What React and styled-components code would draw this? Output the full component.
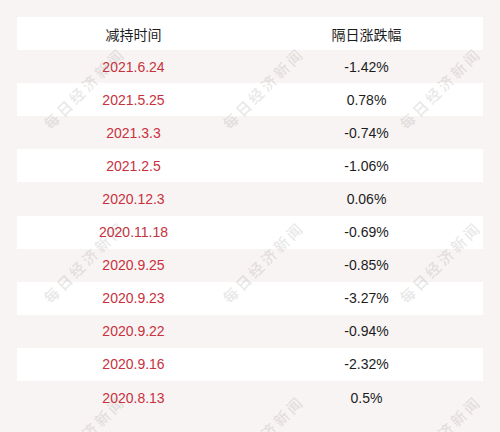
import React from "react";
import styled, { createGlobalStyle } from "styled-components";

const GlobalStyle = createGlobalStyle`
    html, body {
        margin: 0;
        padding: 0;
        background: #f8f4f4;
    }
    body {
        font-family: "Liberation Sans", "Noto Sans CJK SC", sans-serif;
    }
`;

const Page = styled.div`
    position: relative;
    width: 500px;
    height: 432px;
    overflow: hidden;
    background: #f8f4f4;
    padding: 17px 17px 0 17px;
    box-sizing: border-box;
`;

const Table = styled.div`
    width: 466px;
    display: flex;
    flex-direction: column;
`;

const Row = styled.div`
    display: grid;
    grid-template-columns: 1fr 1fr;
    height: 33.1px;
    align-items: center;
    background: ${(props) => (props.striped ? "transparent" : "#ffffff")};
`;

const Cell = styled.div`
    text-align: center;
    font-size: 14px;
    line-height: 16px;
    color: ${(props) => (props.red ? "#c8313d" : "#1c1c1c")};
    font-family: ${(props) =>
        props.head
            ? `"Noto Sans CJK SC", sans-serif`
            : `"Liberation Sans", Arial, sans-serif`};
`;

const Mark = styled.div`
    position: absolute;
    left: ${(props) => props.x}px;
    top: ${(props) => props.y}px;
    transform: translate(-50%, -50%) rotate(-45deg);
    font-family: "Noto Sans CJK SC", serif;
    font-weight: 700;
    font-size: 15px;
    letter-spacing: 3px;
    white-space: nowrap;
    color: rgba(90, 80, 80, 0.13);
    pointer-events: none;
`;

const rows = [
    ["2021.6.24", "-1.42%"],
    ["2021.5.25", "0.78%"],
    ["2021.3.3", "-0.74%"],
    ["2021.2.5", "-1.06%"],
    ["2020.12.3", "0.06%"],
    ["2020.11.18", "-0.69%"],
    ["2020.9.25", "-0.85%"],
    ["2020.9.23", "-3.27%"],
    ["2020.9.22", "-0.94%"],
    ["2020.9.16", "-2.32%"],
    ["2020.8.13", "0.5%"],
];

// watermark grid
const marks = [];
[88, 262, 436].forEach((y) => {
    [84, 263, 440].forEach((x) => marks.push({ x, y }));
});

export default function App() {
    return (
        <Page>
            <GlobalStyle />
            <Table>
                <Row>
                    <Cell head>减持时间</Cell>
                    <Cell head>隔日涨跌幅</Cell>
                </Row>
                {rows.map((r, i) => (
                    <Row key={i} striped={i % 2 === 0}>
                        <Cell red>{r[0]}</Cell>
                        <Cell>{r[1]}</Cell>
                    </Row>
                ))}
            </Table>
            {marks.map((m, i) => (
                <Mark key={i} x={m.x} y={m.y}>
                    每日经济新闻
                </Mark>
            ))}
        </Page>
    );
}
